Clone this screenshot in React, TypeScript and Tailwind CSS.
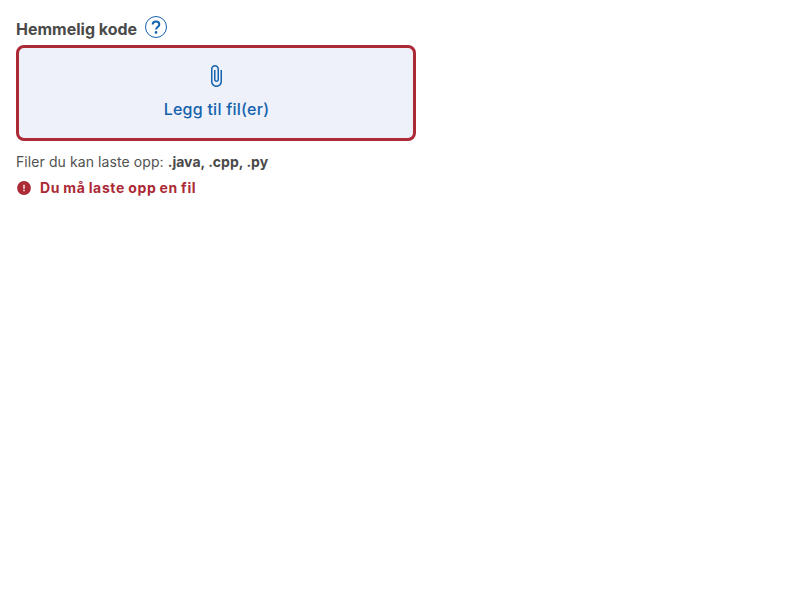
export default function App() {
  return (
    <main className="flex w-[432px] flex-col p-4 font-['Inter',sans-serif] text-[#4a4a4a]">
      <div className="flex h-[29px] items-start gap-2">
        <label className="pt-px text-[16px] leading-6 font-bold">Hemmelig kode</label>
        <button className="flex size-[22px] items-center justify-center rounded-full border border-[#1362ae] text-[#1362ae]">
          <svg viewBox="0 0 22 22" className="size-[22px] shrink-0" fill="none" stroke="currentColor" strokeWidth="2">
            <path d="M7.700 8.600C7.700 6.700 9.100 5.500 11 5.500s3.300 1.200 3.300 3c0 2.400-3.300 2.600-3.300 5.100" />
            <circle cx="11" cy="16.400" r="1.300" fill="currentColor" stroke="none" />
          </svg>
        </button>
      </div>
      <button className="flex h-24 w-[400px] flex-col items-center rounded-lg border-3 border-[#ab2a36] bg-[#eef1fa] pt-4 text-[#1362ae]">
        <svg viewBox="0 0 24 24" className="size-6" fill="currentColor">
          <path d="M16.500 6v11.500c0 2.210-1.790 4-4 4s-4-1.790-4-4V5c0-1.380 1.120-2.500 2.500-2.500s2.500 1.120 2.500 2.500v10.500c0 .55-.45 1-1 1s-1-.45-1-1V6H10v9.500c0 1.380 1.120 2.500 2.500 2.500s2.500-1.120 2.500-2.500V5c0-2.210-1.790-4-4-4S7 2.790 7 5v12.500c0 3.040 2.460 5.500 5.500 5.500s5.500-2.460 5.500-5.500V6h-1.500z" />
        </svg>
        <span className="mt-[7px] pl-px text-[16px] leading-7 font-medium tracking-[0.25px]">Legg til fil(er)</span>
      </button>
      <p className="mt-2.5 text-[14px] leading-[22px] tracking-[0.085px] text-[#525252]">
        Filer du kan laste opp: <b className="tracking-[0.02px] text-[#4a4a4a]">.java, .cpp, .py</b>
      </p>
      <div className="mt-1 flex items-center gap-2 text-[#ab2a36]">
        <svg viewBox="0 0 16 16" className="size-4">
          <circle cx="8" cy="8" r="6.900" fill="currentColor" />
          <path d="M8 4.700v4M8 9.800v1.500" stroke="#f6e6e8" strokeWidth="1.500" />
        </svg>
        <span className="text-[14px] leading-[22px] font-bold tracking-[0.65px] [word-spacing:-0.8px]">Du må laste opp en fil</span>
      </div>
    </main>
  );
}
